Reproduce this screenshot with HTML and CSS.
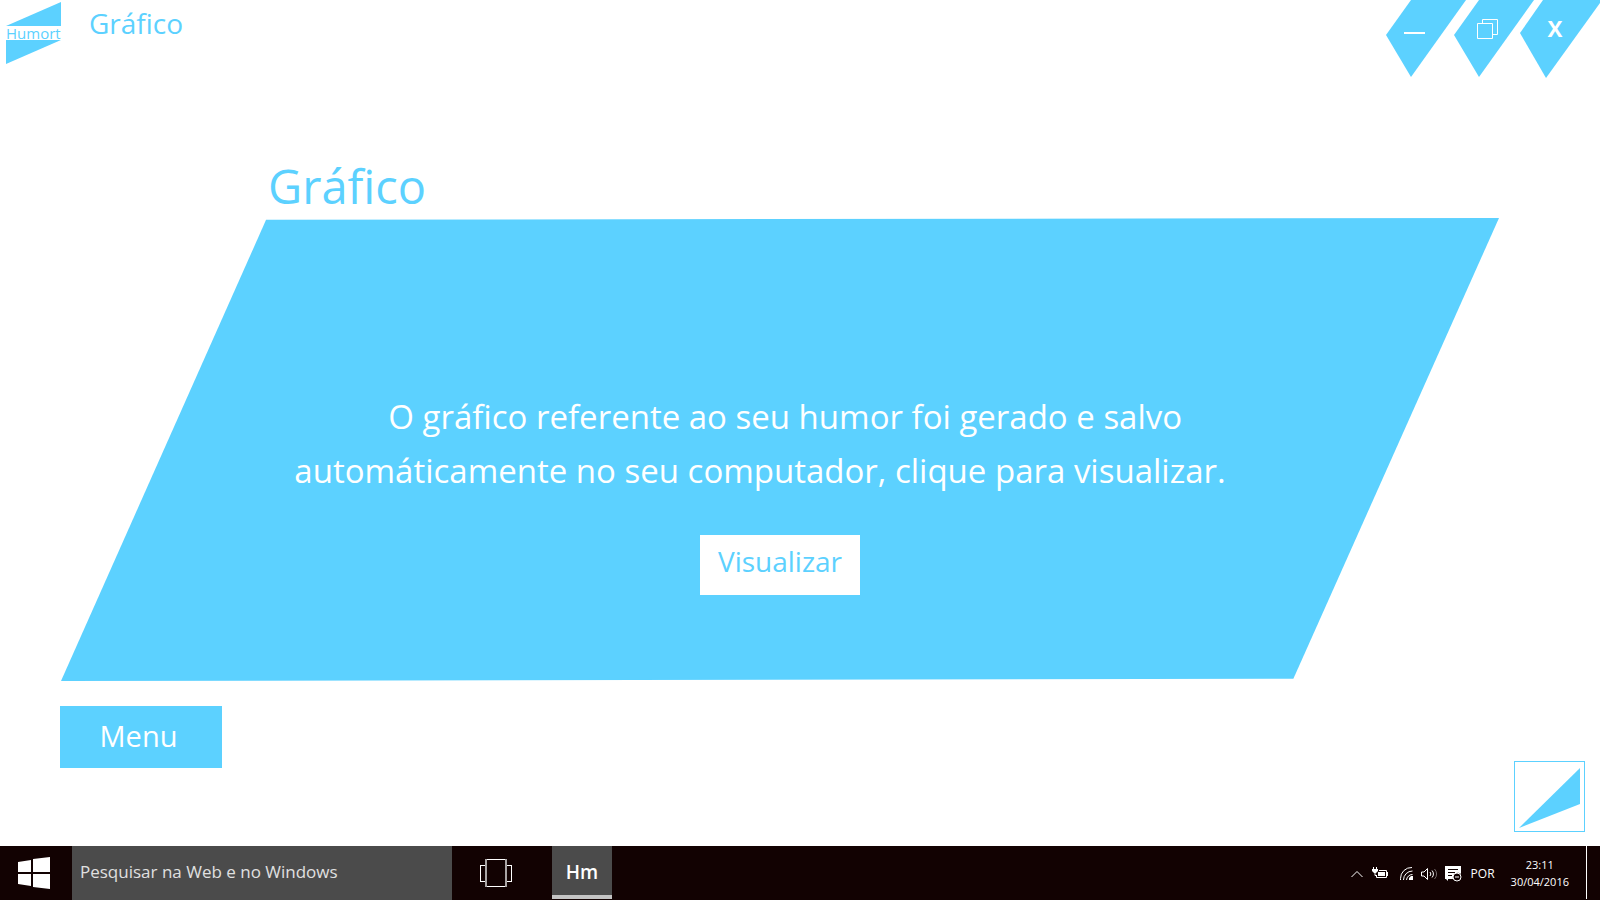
FILE: index.html
```html
<!DOCTYPE html>
<html lang="pt-BR">
<head>
<meta charset="utf-8">
<title>Humort - Gráfico</title>
<link rel="stylesheet" href="styles.css">
</head>
<body>
<header class="titlebar">
  <a class="brand" href="#" aria-label="Humort">
    <svg class="brand-top" viewBox="0 0 56 24"><path d="M0 24 55 0V24z"/></svg>
    <span class="brand-name">Humort</span>
    <svg class="brand-bottom" viewBox="0 0 56 24"><path d="M0 0H55L0 24z"/></svg>
  </a>
  <span class="window-title">Gráfico</span>
  <div class="window-controls">
    <button class="control" type="button" aria-label="Minimizar">
      <svg viewBox="0 0 80 80"><path class="fill" d="M25 0H80L25 77 0 35z"/><path class="line thick" d="M18 33H39"/></svg>
    </button>
    <button class="control" type="button" aria-label="Restaurar">
      <svg viewBox="0 0 80 80"><path class="fill" d="M25 0H80L25 77 0 35z"/><path class="line" d="M23.500 23.500H38.500V38.500H23.500zM28.500 23.500V19.500H43.500V34.500H38.500"/></svg>
    </button>
    <button class="control" type="button" aria-label="Fechar">
      <svg viewBox="0 0 80 80"><path class="fill" d="M23 0H80V3L26 78 0 33z"/></svg>
      <span class="close-mark">x</span>
    </button>
  </div>
</header>
<main class="content">
  <h1 class="heading">Gráfico</h1>
  <section class="panel">
    <p class="message">O gráfico referente ao seu humor foi gerado e salvo<br>automáticamente no seu computador, clique para visualizar.</p>
    <button class="view-button" type="button">Visualizar</button>
  </section>
  <div class="actions">
    <button class="menu-button" type="button">Menu</button>
    <button class="corner-button" type="button" aria-label="Humort">
      <svg viewBox="0 0 71 71"><path d="M66 7V43L5 67z"/></svg>
    </button>
  </div>
</main>
<footer class="taskbar">
  <button class="start" type="button" aria-label="Iniciar">
    <svg viewBox="0 0 32 32"><path d="M0 5 13 3V15H0zM15 2 32 0V15H15zM0 17H13V29L0 27zM15 17H32V32L15 30z"/></svg>
  </button>
  <input class="search" type="text" placeholder="Pesquisar na Web e no Windows" aria-label="Pesquisar">
  <button class="task-view" type="button" aria-label="Visão de tarefas">
    <svg viewBox="0 0 32 28"><path class="bright" d="M6 .5H26M6 27.500H26M0 6.500H6M.5 6V22M0 22.500H6M26 6.500H32M31.500 6V22M26 22.500H32"/><path class="dim" d="M6 0V28M26 0V28"/></svg>
  </button>
  <button class="app" type="button">Hm</button>
  <div class="tray">
    <svg class="icon-chevron" viewBox="0 0 12 8"><path d="M.5 7 6 1.500 11.500 7"/></svg>
    <svg class="icon-battery" viewBox="0 0 17 13"><path d="M7 3.500H14.500V10.500H4.500V9M15.500 5V9M1.500 0V2M4.500 0V2M3 5V8.500H5"/><path class="solid" d="M0 2H6V4L4 6H2L0 4zM6 5H13V9H6z"/></svg>
    <svg class="icon-wifi" viewBox="0 0 13 13"><path d="M.5 13V11.500A11 11 0 0 1 12 .5M3.500 13A9 9 0 0 1 12.500 4M6.500 13A6 6 0 0 1 12.500 7.500"/><path class="solid" d="M9 13V11L11 9H13V13z"/></svg>
    <svg class="icon-volume" viewBox="0 0 17 12"><path d="M.5 4V8H3L6.500 11.500V.5L3 4zM9 4A3 3 0 0 1 9 8M11 2.500A5 5 0 0 1 11 9.500"/><path class="faint" d="M13.500 1A7 7 0 0 1 13.500 11"/></svg>
    <svg class="icon-note" viewBox="0 0 17 16"><path class="solid" d="M0 0H16V8A5 5 0 0 0 8 13H3V15L1 13H0z"/><path class="cut" d="M3 3.500H13M3 6.500H10M3 9.500H7"/><circle cx="12" cy="11" r="4"/><path d="M10 11H14"/></svg>
    <span class="language">POR</span>
    <time class="clock" datetime="2016-04-30T23:11">23:11<br>30/04/2016</time>
  </div>
</footer>
</body>
</html>
```
FILE: styles.css
```css
:root {
  --blue: #5cd1ff;
  --dark: #120202;
  --gray: #4b4b4b;
}

* {
  box-sizing: border-box;
}

body {
  margin: 0;
  min-height: 100vh;
  display: flex;
  flex-direction: column;
  background: #fff;
  color: var(--blue);
  font-family: "Open Sans", "Noto Sans", sans-serif;
}

button {
  border: 0;
  padding: 0;
  font-family: inherit;
  background: transparent;
}

svg {
  display: block;
  flex: none;
  overflow: visible;
}

.titlebar {
  display: flex;
  align-items: flex-start;
  padding-left: 6px;
}

.brand {
  width: 56px;
  padding-top: 2px;
  color: inherit;
  text-decoration: none;
}

.brand svg {
  width: 56px;
  height: 24px;
  fill: var(--blue);
}

.brand-name {
  display: block;
  font-size: 15px;
  line-height: 14px;
  white-space: nowrap;
}

.window-title {
  margin-left: 27px;
  font-size: 28px;
  line-height: 46px;
}

.window-controls {
  display: grid;
  grid-template-columns: 68px 66px 80px;
  margin-left: auto;
}

.control {
  display: grid;
  height: 80px;
  color: #fff;
}

.control svg,
.close-mark {
  grid-area: 1 / 1;
}

.control svg {
  width: 80px;
  height: 80px;
}

.fill {
  fill: var(--blue);
}

.line {
  fill: none;
  stroke: #fff;
}

.thick {
  stroke-width: 2;
}

.close-mark {
  width: 70px;
  font-size: 28px;
  font-weight: 600;
  line-height: 52px;
}

.content {
  flex: 1;
  display: flex;
  flex-direction: column;
  padding: 76px 15px 14px 60px;
}

.heading {
  margin: 0 0 0 208px;
  font-size: 47px;
  font-weight: 400;
  line-height: 60px;
}

.panel {
  display: flex;
  flex-direction: column;
  align-items: center;
  margin: 2px 86px 0 1px;
  padding: 172px 0 86px;
  background: var(--blue);
  clip-path: polygon(14.26% 0.4%, 100% 0, 85.7% 99.5%, 0 100%);
}

.message {
  margin: 0 40px 37px 0;
  color: #fff;
  font-size: 33px;
  line-height: 54px;
  text-indent: 94px;
}

.view-button {
  width: 160px;
  height: 60px;
  padding-bottom: 8px;
  background: #fff;
  color: var(--blue);
  font-size: 28px;
}

.actions {
  flex: 1;
  display: flex;
  justify-content: space-between;
  align-items: flex-end;
}

.menu-button {
  align-self: flex-start;
  width: 162px;
  height: 62px;
  margin-top: 25px;
  padding: 0 5px 3px 0;
  background: var(--blue);
  color: #fff;
  font-size: 29px;
}

.corner-button {
  width: 71px;
  height: 71px;
  box-shadow: inset 0 0 0 1px var(--blue);
}

.corner-button svg {
  width: 71px;
  height: 71px;
  fill: var(--blue);
}

.taskbar {
  display: flex;
  height: 54px;
  background: var(--dark);
  color: #fff;
}

.start {
  display: grid;
  place-items: center;
  width: 72px;
  padding-right: 4px;
}

.start svg {
  width: 32px;
  height: 32px;
  fill: #fff;
}

.search {
  width: 380px;
  border: 0;
  padding: 0 8px 4px;
  background: var(--gray);
  color: #e0e0e0;
  font-family: inherit;
  font-size: 17px;
}

.search::placeholder {
  color: #e0e0e0;
  opacity: 1;
}

.task-view {
  display: grid;
  place-items: center;
  width: 100px;
  padding-right: 12px;
}

.task-view svg {
  width: 32px;
  height: 28px;
}

.bright {
  stroke: #fff;
}

.dim {
  stroke: #a9a4a4;
  stroke-width: 2;
}

.app {
  width: 60px;
  height: 53px;
  padding-top: 2px;
  border-bottom: 4px solid #c4c4c4;
  background: var(--gray);
  color: #fff;
  font-size: 19px;
  font-weight: 600;
}

.tray {
  display: flex;
  align-items: center;
  margin-left: auto;
  margin-right: 13px;
  padding-top: 2px;
  padding-right: 17px;
  height: 53px;
  border-right: 1px solid #fff;
  font-size: 12px;
}

.tray svg {
  fill: none;
  stroke: #fff;
}

.tray .solid {
  fill: #fff;
  stroke: none;
}

.tray .faint {
  stroke: #746b6b;
}

.tray .cut {
  stroke: var(--dark);
}

.tray circle {
  fill: var(--dark);
}

.icon-chevron {
  width: 12px;
  height: 8px;
  margin-right: 9px;
}

.icon-battery {
  width: 17px;
  height: 13px;
  margin-right: 11px;
}

.icon-wifi {
  width: 13px;
  height: 13px;
  margin-right: 8px;
}

.icon-volume {
  width: 17px;
  height: 12px;
  margin-right: 7px;
}

.icon-note {
  width: 17px;
  height: 16px;
  margin-right: 9px;
}

.language {
  width: 40px;
}

.clock {
  padding-bottom: 2px;
  font-size: 11px;
  line-height: 17px;
  text-align: center;
}
```
